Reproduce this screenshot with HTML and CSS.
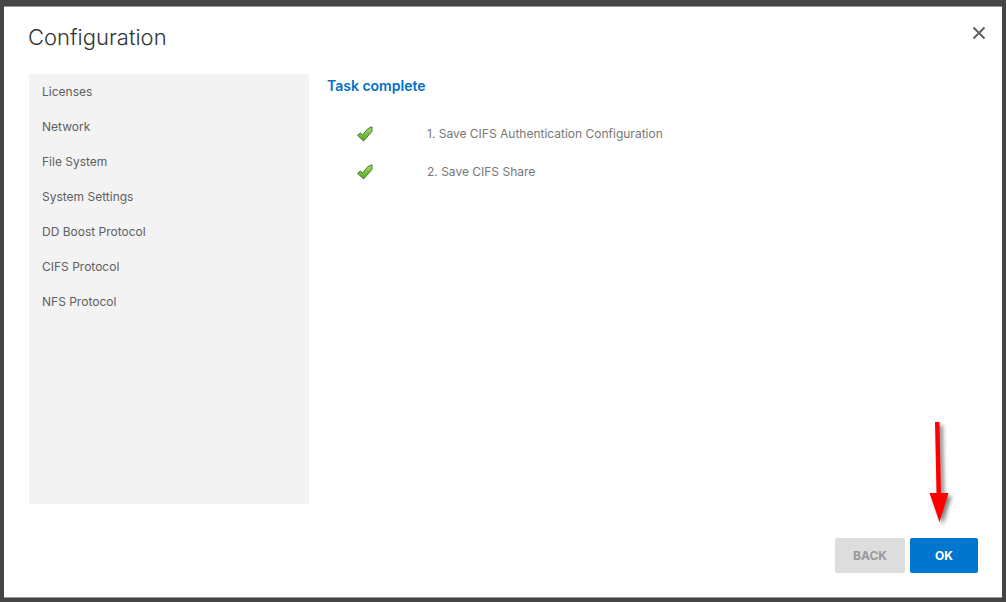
FILE: index.html
```html
<!DOCTYPE html>
<html lang="en">
<head>
<meta charset="utf-8">
<meta name="viewport" content="width=device-width, initial-scale=1">
<title>Configuration</title>
<link rel="stylesheet" href="styles.css">
</head>
<body>
<main class="modal" role="dialog" aria-labelledby="modal-title">
  <header class="modal-header">
    <h1 class="modal-title" id="modal-title">Configuration</h1>
    <button class="close" type="button" aria-label="Close">
      <svg width="14" height="14" viewBox="0 0 14 14"><path d="M1.5 1.5 12.5 12.5M12.5 1.5 1.5 12.5" fill="none" stroke="#5f6264" stroke-width="2"/></svg>
    </button>
  </header>
  <div class="modal-body">
    <nav class="steps">
      <ul class="step-list">
        <li class="step">Licenses</li>
        <li class="step">Network</li>
        <li class="step">File System</li>
        <li class="step">System Settings</li>
        <li class="step">DD Boost Protocol</li>
        <li class="step">CIFS Protocol</li>
        <li class="step">NFS Protocol</li>
      </ul>
    </nav>
    <section class="content">
      <h2 class="content-title">Task complete</h2>
      <ul class="tasks">
        <li class="task">
          <svg class="check" width="18" height="18" viewBox="0 0 18 18"><defs><linearGradient id="leaf" x1="0" y1="0" x2="0" y2="1"><stop offset="0" stop-color="#a6e25c"/><stop offset="1" stop-color="#4da521"/></linearGradient></defs><path d="M1.500 10.300 4.300 8l2.200 2 5.300-6.300 4.200-1.900v4.600L7.600 16z" fill="url(#leaf)" stroke="#56733f" stroke-width="1" stroke-linejoin="round"/></svg>
          <span>1. Save CIFS Authentication Configuration</span>
        </li>
        <li class="task">
          <svg class="check" width="18" height="18" viewBox="0 0 18 18"><path d="M1.500 10.300 4.300 8l2.200 2 5.300-6.300 4.200-1.900v4.600L7.600 16z" fill="url(#leaf)" stroke="#56733f" stroke-width="1" stroke-linejoin="round"/></svg>
          <span>2. Save CIFS Share</span>
        </li>
      </ul>
    </section>
  </div>
  <footer class="modal-footer">
    <button class="btn btn-back" type="button" disabled>BACK</button>
    <div class="ok-wrap">
      <svg class="arrow" width="30" height="110" viewBox="0 0 30 110" aria-hidden="true"><path d="M11 3h4.500l1.500 71H24.500L15.500 103 5.500 74h7z" fill="#f00"/></svg>
      <button class="btn btn-ok" type="button">OK</button>
    </div>
  </footer>
</main>
</body>
</html>
```
FILE: styles.css
```css
* {
  box-sizing: border-box;
}

body {
  margin: 0;
  min-height: 100vh;
  padding: 6px 4px 4px;
  display: flex;
  background: linear-gradient(#454545 289px, #3a4047 289px 290px, #444643 290px 338px, #3a4047 338px 339px, #454545 339px);
  color: #606060;
  font-family: Inter, "Open Sans", sans-serif;
  font-size: 12px;
  line-height: 20px;
}

ul {
  margin: 0;
  padding: 0;
  list-style: none;
}

.modal {
  flex: 1;
  display: flex;
  flex-direction: column;
  padding: 14px 24px 24px;
  background: #fff;
  border-top: 1px solid #999;
  border-bottom: 1px solid #999;
}

.modal-header {
  display: flex;
  justify-content: space-between;
  align-items: flex-start;
}

.modal-title {
  margin: 0;
  color: #333;
  font-size: 22px;
  font-weight: 300;
  line-height: 32px;
}

.close {
  display: flex;
  margin: 0 -8px 0 0;
  padding: 5px 0;
  border: 0;
  background: none;
}

.modal-body {
  flex: 1;
  display: flex;
  gap: 18px;
  padding: 21px 0 34px 1px;
}

.steps {
  flex: 0 0 280px;
  padding: 0 13px;
  background: #f3f3f3;
}

.step {
  height: 35px;
  padding-top: 8px;
}

.content {
  flex: 1;
}

.content-title {
  margin: 0;
  padding-top: 2px;
  color: #0070c9;
  font-size: 14px;
  font-weight: 600;
  line-height: 20px;
}

.tasks {
  padding-top: 19px;
}

.task {
  display: flex;
  align-items: center;
  gap: 53px;
  height: 38px;
  padding-left: 29px;
  color: #777;
}

.modal-footer {
  display: flex;
  justify-content: flex-end;
  gap: 5px;
}

.btn {
  height: 35px;
  padding: 0;
  border: 0;
  border-radius: 2px;
  font-family: inherit;
  font-size: 12px;
  font-weight: 700;
}

.btn-back {
  width: 70px;
  background: #ddd;
  color: #999;
}

.ok-wrap {
  position: relative;
}

.btn-ok {
  width: 68px;
  background: #0076ce;
  color: #fff;
}

.arrow {
  position: absolute;
  right: 24px;
  bottom: 44px;
  pointer-events: none;
  filter: drop-shadow(3px 3px 2px rgba(0, 0, 0, 0.5));
}
```
